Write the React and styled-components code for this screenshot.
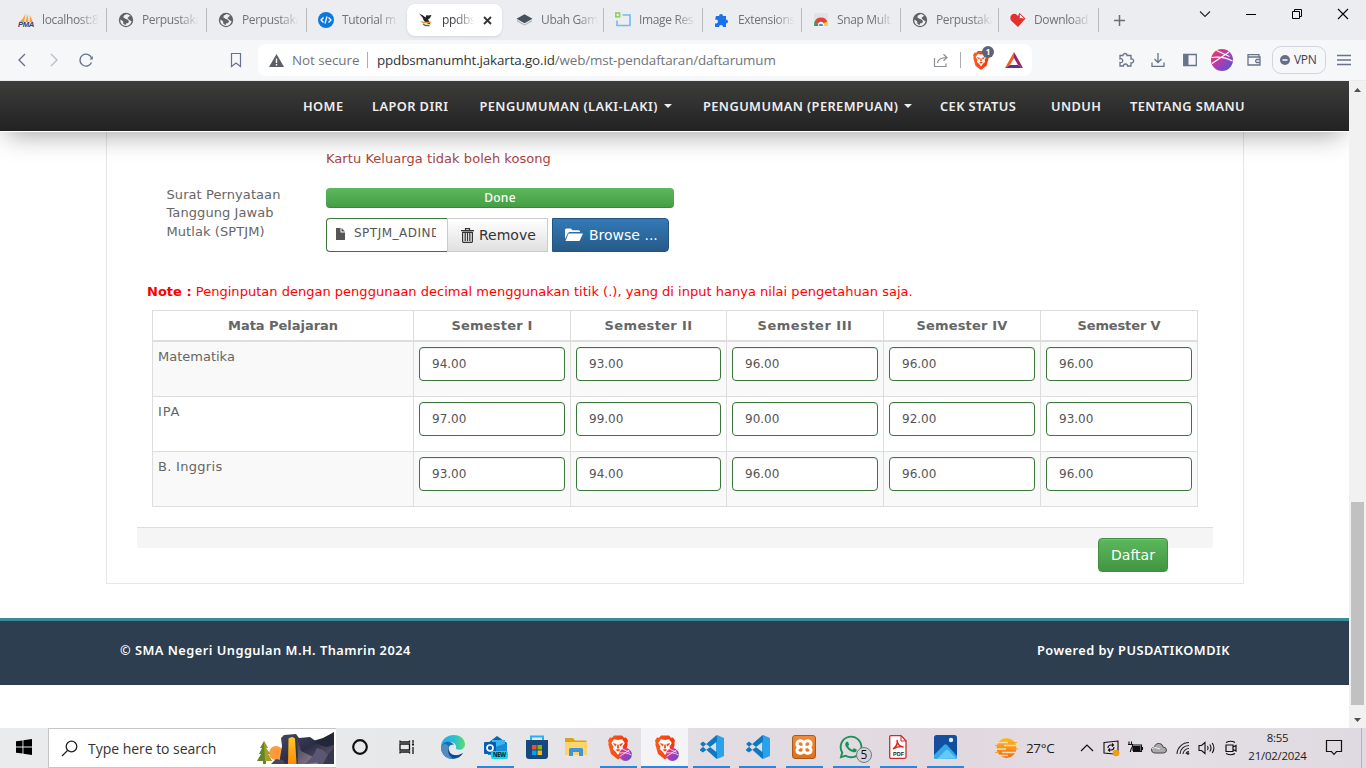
import React from "react";
import styled, { createGlobalStyle, css } from "styled-components";
import { FaWhatsapp } from "react-icons/fa";
import { SiXampp } from "react-icons/si";

const UI = '"Open Sans", "Noto Sans", sans-serif';
const PAGE = '"DejaVu Sans", "Noto Sans", sans-serif';

const Global = createGlobalStyle`
  * { box-sizing: border-box; }
  body { margin: 0; overflow: hidden; background: #fff; }
  svg { display: block; flex: none; overflow: visible; }
`;

const Screen = styled.div`
  width: 1366px;
  height: 768px;
  display: flex;
  flex-direction: column;
  overflow: hidden;
`;

/* ---------- browser chrome ---------- */
const TabStrip = styled.div`
  height: 40px;
  flex: none;
  display: flex;
  align-items: center;
  padding-left: 7px;
  background: #ecedf1;
  font: 12px/18px ${UI};
  letter-spacing: -0.35px;
  color: #6f7379;
`;
const Tab = styled.div`
  width: ${(p) => p.$w}px;
  height: 24px;
  display: flex;
  align-items: center;
  gap: 8px;
  padding-left: 11px;
  border-right: 1px solid #b9bbc0;
  ${(p) =>
    p.$plain &&
    css`
      border-right-color: transparent;
    `}
  ${(p) =>
    p.$active &&
    css`
      height: 32px;
      margin-right: 3px;
      border: 0;
      border-radius: 8px;
      background: #fff;
      color: #3b3e42;
      box-shadow: 0 1px 3px rgba(0, 0, 0, 0.1);
    `}
`;
const TabTitle = styled.span`
  width: ${(p) => p.$w || 57}px;
  white-space: nowrap;
  mask-image: linear-gradient(90deg, #000 calc(100% - 20px), transparent);
`;
const NewTab = styled.div`
  width: 40px;
  display: flex;
  justify-content: center;
`;
const WindowButtons = styled.div`
  margin-left: auto;
  height: 28px;
  align-self: flex-start;
  display: flex;
`;
const WindowButton = styled.div`
  width: 46px;
  display: flex;
  align-items: center;
  justify-content: center;
`;
const Toolbar = styled.div`
  height: 41px;
  flex: none;
  display: flex;
  align-items: center;
  padding: 0 6px;
  background: #f5f7f9;
  border-bottom: 1px solid #e9ecef;
`;
const ToolSlot = styled.div`
  width: 32px;
  height: 32px;
  display: flex;
  align-items: center;
  justify-content: center;
  margin-left: ${(p) => p.$ml || 0}px;
`;
const AddressBar = styled.div`
  width: 774px;
  height: 32px;
  margin-left: 6px;
  padding-left: 11px;
  display: flex;
  align-items: center;
  border-radius: 8px;
  background: #fff;
  font: 13.4px/20px ${UI};
  color: #6f757c;
`;
const Security = styled.span`
  width: 75px;
  margin-left: 8px;
  white-space: nowrap;
  letter-spacing: -0.05px;
`;
const Divider = styled.i`
  width: 1px;
  height: 16px;
  margin-left: ${(p) => p.$ml || 0}px;
  background: #a9acb2;
`;
const Url = styled.span`
  width: 556px;
  margin-left: 9px;
  white-space: nowrap;
  letter-spacing: -0.135px;
  b {
    font-weight: 400;
    color: #2f3338;
  }
`;
const ShieldWrap = styled.div`
  position: relative;
  margin-left: 12px;
  width: 20px;
`;
const ShieldCount = styled.span`
  position: absolute;
  left: 9px;
  top: -5px;
  width: 12px;
  height: 12px;
  border-radius: 6px;
  background: #5d6276;
  color: #fff;
  text-align: center;
  font: 700 8px/12px ${UI};
`;
const VpnPill = styled.div`
  width: 54px;
  height: 28px;
  margin: 0 2px;
  display: flex;
  align-items: center;
  gap: 4px;
  padding-left: 7px;
  border: 1px solid #d2d5dd;
  border-radius: 9px;
  color: #3e434d;
  font: 12px/18px ${UI};
  letter-spacing: -0.3px;
`;

/* ---------- web page ---------- */
const Viewport = styled.div`
  height: 647px;
  flex: none;
  display: flex;
`;
const Page = styled.div`
  width: 1349px;
  display: flex;
  flex-direction: column;
  overflow: hidden;
  background: #fff;
  font: 13px/18.57px ${PAGE};
  color: #666;
`;
const Nav = styled.nav`
  height: 51px;
  flex: none;
  position: relative;
  display: flex;
  align-items: center;
  padding-left: 303px;
  border-bottom: 1px solid #fff;
  background: linear-gradient(#3c3d3b, #222) padding-box;
  box-shadow: 0 10px 26px -7px rgba(0, 0, 0, 0.36);
  color: #eee;
  font: 600 12.8px/20px "Noto Sans", "Open Sans", sans-serif;
  letter-spacing: 0.42px;
`;
const NavItem = styled.a`
  width: ${(p) => p.$w}px;
  display: flex;
  align-items: center;
  gap: 6px;
  white-space: nowrap;
`;
const Caret = styled.i`
  border: 4px solid transparent;
  border-top-color: #eee;
  border-bottom: 0;
`;
const Card = styled.main`
  width: 1138px;
  height: 452px;
  flex: none;
  margin-left: 106px;
  padding: 18px 30px 0;
  border: 1px solid #e6e7e9;
  border-top: 0;
`;
const ErrorText = styled.div`
  padding-left: 189px;
  color: #a94442;
  letter-spacing: 0.05px;
`;
const FormRow = styled.div`
  margin: 17px 0 0 29.5px;
  display: flex;
  height: 67px;
`;
const Label = styled.label`
  width: 159.5px;
  flex: none;
  letter-spacing: 0.08px;
`;
const Upload = styled.div`
  width: 348px;
  padding-top: 2px;
`;
const Progress = styled.div`
  height: 20px;
  margin-bottom: 10px;
  border-radius: 4px;
  background: linear-gradient(#5cb85c, #449d44);
  box-shadow: inset 0 -1px 0 rgba(0, 0, 0, 0.15);
  color: #fff;
  text-align: center;
  font: 500 12px/20px "Noto Sans", sans-serif;
  letter-spacing: 0.3px;
`;
const FileGroup = styled.div`
  height: 34px;
  display: flex;
  font-size: 14px;
  white-space: nowrap;
`;
const FileName = styled.div`
  width: 121px;
  display: flex;
  align-items: center;
  gap: 9px;
  padding: 0 11px 2px 9px;
  border: 1px solid #3c763d;
  border-right: 0;
  border-radius: 4px 0 0 4px;
  color: #555;
  font-size: 12px;
  span {
    width: 82px;
    overflow: hidden;
    letter-spacing: 0.5px;
  }
`;
const RemoveButton = styled.div`
  width: 101px;
  display: flex;
  align-items: center;
  gap: 5px;
  padding: 1px 0 0 13px;
  border: 1px solid #ccc;
  background: linear-gradient(#fff, #e0e0e0);
  color: #333;
`;
const BrowseButton = styled.div`
  width: 117px;
  margin-left: 4px;
  display: flex;
  align-items: center;
  gap: 6px;
  padding: 1px 0 0 12px;
  border: 1px solid #245580;
  border-radius: 0 4px 4px 0;
  background: linear-gradient(#337ab7, #265a88);
  color: #fff;
`;
const Note = styled.p`
  margin: 30px 0 0 10px;
  color: #f00;
  white-space: nowrap;
  letter-spacing: 0.015px;
`;
const Table = styled.div`
  width: 1046px;
  margin: 9px 0 0 15px;
  border-top: 1px solid #ddd;
  border-left: 1px solid #ddd;
`;
const Row = styled.div`
  display: grid;
  grid-template-columns: 261px 157px 156px 157px 157px 157px;
  height: ${(p) => (p.$head ? 31 : 55)}px;
  border-bottom: ${(p) => (p.$head ? 2 : 1)}px solid #ddd;
  background: ${(p) => (p.$odd ? "#f9f9f9" : "#fff")};
`;
const Cell = styled.div`
  padding: ${(p) => (p.$text ? 6 : 5)}px 5px 0;
  border-right: 1px solid #ddd;
  letter-spacing: ${(p) => p.$spacing || 0}px;
`;
const HeadCell = styled(Cell)`
  font-weight: 700;
  text-align: center;
`;
const Score = styled.div`
  height: 34px;
  padding-left: 12px;
  border: 1px solid #3c763d;
  border-radius: 4px;
  background: #fff;
  box-shadow: inset 0 1px 1px rgba(0, 0, 0, 0.075);
  color: #555;
  font-size: 12px;
  line-height: 32px;
`;
const Strip = styled.div`
  height: 21px;
  margin-top: 20px;
  border-top: 1px solid #ddd;
  border-radius: 0 0 3px 3px;
  background: #f5f5f5;
`;
const SubmitButton = styled.div`
  position: relative;
  width: 70px;
  height: 34px;
  margin: -10px 45px 0 auto;
  border: 1px solid #3e8f3e;
  border-radius: 4px;
  background: linear-gradient(#5cb85c, #419641);
  box-shadow: inset 0 1px 0 rgba(255, 255, 255, 0.15);
  color: #fff;
  text-align: center;
  font-size: 14px;
  line-height: 32px;
`;
const Footer = styled.footer`
  height: 67px;
  flex: none;
  margin-top: 34px;
  padding: 20px 119px 0 120px;
  display: flex;
  justify-content: space-between;
  border-top: 3px solid #3b8c99;
  background: #2c3e50;
  color: #fff;
  font: 600 12.8px/18px "Noto Sans", sans-serif;
  letter-spacing: 0.48px;
  white-space: nowrap;
`;
const ScrollTrack = styled.div`
  width: 17px;
  padding: 7px 2px 6px;
  display: flex;
  flex-direction: column;
  align-items: center;
  background: #f1f1f1;
`;
const ScrollThumb = styled.div`
  width: 13px;
  height: 203px;
  margin: auto 0 13px;
  background: #c1c1c1;
`;

/* ---------- desktop taskbar ---------- */
const Taskbar = styled.div`
  height: 40px;
  flex: none;
  display: flex;
  background: linear-gradient(90deg, #e9ebed 0, #e7e8ea 34%, #e2dde3 52%, #e1d9df 70%, #e4dee5 85%, #dfd9e1);
  color: #1c1c1c;
  font-family: ${UI};
`;
const SearchBox = styled.div`
  width: 288px;
  display: flex;
  align-items: center;
  padding-left: 12px;
  overflow: hidden;
  border: 1px solid #c5c5c9;
  border-right: 0;
  background: #fff;
  color: #333;
  font-size: 14px;
  letter-spacing: -0.03px;
  span {
    width: 169px;
    margin-left: 10px;
    white-space: nowrap;
  }
`;
const TaskSlot = styled.div`
  width: ${(p) => p.$w}px;
  display: flex;
  align-items: center;
  justify-content: center;
  border-bottom: 2px solid transparent;
  ${(p) =>
    p.$open &&
    css`
      background: linear-gradient(#1a8cf0, #1a8cf0) center bottom / 37px 2px no-repeat border-box;
    `}
  ${(p) =>
    p.$active &&
    css`
      background: #f4f3f5;
      border-bottom-color: #1a8cf0;
    `}
`;
const Badged = styled.div`
  position: relative;
  color: #16935a;
`;
const CountBadge = styled.span`
  position: absolute;
  left: 18px;
  top: 13px;
  width: 16px;
  height: 16px;
  border: 1px solid #777;
  border-radius: 8px;
  background: #d6d3d7;
  color: #111;
  text-align: center;
  font: 12px/14px ${UI};
`;
const Profile = styled.span`
  position: absolute;
  right: -4px;
  bottom: -1px;
`;
const Weather = styled.div`
  margin-left: 27px;
  width: 80px;
  display: flex;
  align-items: center;
  gap: 9px;
  font-size: 13.5px;
  letter-spacing: -0.35px;
`;
const TraySlot = styled.div`
  width: 24px;
  display: flex;
  align-items: center;
  justify-content: center;
`;
const Clock = styled.div`
  width: 69px;
  padding-top: 1px;
  text-align: center;
  font-size: 11.4px;
  line-height: 18px;
  letter-spacing: -0.22px;
`;
const ShowDesktop = styled.div`
  width: 5px;
  margin-left: auto;
  border-left: 1px solid #b5afb8;
`;

/* ---------- drawings ---------- */
const Line = ({ d, s = 16, c = "#68738a", w = 1.4, children }) => (
  <svg width={s} height={s} viewBox={`0 0 ${s} ${s}`} fill="none" stroke={c} strokeWidth={w}>
    {d && <path d={d} />}
    {children}
  </svg>
);
const Globe = () => (
  <svg width="16" height="16" viewBox="0 0 16 16">
    <circle cx="8" cy="8" r="7.2" fill="#5f6368" />
    <path d="M8.7 2.1 6 3.5 5.2 5.3l2.2 1.5 2.5 1 1.1 1.7-1.1 1.7H8.1L7.7 13 5.5 12 5 9.3 2.4 7.5a5.8 5.8 0 0 0 2.7 5.8c4 2.1 7.5-.2 8.5-4L11.2 8 9.5 5.9l1.8-1.6 1.2-.2A6 6 0 0 0 8.7 2.1Z" fill="#eef0f3" />
  </svg>
);
const PmaIcon = () => (
  <svg width="16" height="16" viewBox="0 0 16 16">
    <path d="M7.400 1 6.300 10H1.300C4 8 6.500 5 7.400 1ZM8.800 2c1.200 2 1.700 5 1.500 8H7.400C8.500 7.400 9 5 8.800 2Zm2.600.9c1.600 2 2.600 4.500 3.400 7.100h-3.200c.4-2.500.3-4.800-.2-7.100Z" fill="#f89c2c" />
    <text x="0" y="15.300" fontFamily="Liberation Sans" fontWeight="700" fontStyle="italic" fontSize="6.500" textLength="16" lengthAdjust="spacingAndGlyphs" fill="#343a72">PMA</text>
  </svg>
);
const CodeIcon = () => (
  <svg width="16" height="16" viewBox="0 0 16 16" fill="none" stroke="#fff" strokeWidth="1.300">
    <circle cx="8" cy="8" r="8" fill="#0b78dd" stroke="none" />
    <path d="M5.500 5.500 3 8l2.500 2.500M10.500 5.500 13 8l-2.500 2.500M9 4.500l-2 7" />
  </svg>
);
const BirdIcon = () => (
  <svg width="16" height="16" viewBox="0 0 16 16">
    <path d="M1 1.500 5 3.500l2.500 2 1-2.500 1.500.5 3.500-.500-1.500 3-2 1.500 1.500 2.500 1 2.500-3-1L6 9 4.500 5.500Z" fill="#202423" />
    <path d="m1.500 9 4.500.8h8l-2 1.400H5Z" fill="#d99a2b" />
    <path d="m5 12 2.500 1.500h4" stroke="#5c6b4d" strokeWidth="1.400" fill="none" />
  </svg>
);
const LayersIcon = () => (
  <svg width="17" height="16" viewBox="0 0 17 16">
    <path d="m1 8 7.500 4.500L16 8v1.500L8.500 13.500 1 9.500Z" fill="#aeb5bc" />
    <path d="m.5 6.700 8-4.500 8 4.500-8 4.600Z" fill="#46535f" />
  </svg>
);
const ResizeIcon = () => (
  <svg width="16" height="16" viewBox="0 0 16 16" fill="none">
    <path d="M7.500 3H15v10.500H2V8.500" stroke="#6bbcf2" strokeWidth="1.600" />
    <rect x=".8" y="1" width="3.800" height="3.800" stroke="#93cf5b" strokeWidth="1.600" />
  </svg>
);
const PuzzleFilled = () => (
  <svg width="16" height="16" viewBox="0 0 16 16">
    <path d="M2 4h3a2 2 0 1 1 4 0h3v3.400a2 2 0 1 1 0 4V15H9a2 2 0 1 0-4 0H1v-3.700a2 2 0 1 0 0-3.500Z" fill="#1a73e8" />
  </svg>
);
const SnapIcon = () => (
  <svg width="16" height="16" viewBox="0 0 16 16">
    <rect x="1" y="1" width="14" height="7" fill="#e2e3e3" />
    <path d="M1.500 10a7 7 0 0 1 13 0L11 11.500H5Z" fill="#df453a" />
    <path d="M1.500 9.500C1 11 1 12.500 1.200 14H5l.5-2Z" fill="#21a35a" />
    <path d="M11 11 14.500 9.500c.5 1.500.5 3 .3 4.500H11Z" fill="#fdd02f" />
    <circle cx="8" cy="12.500" r="2.700" fill="#fff" />
    <path d="M5.700 14a2.300 2.300 0 0 1 4.600 0Z" fill="#4386f4" />
  </svg>
);
const HeartIcon = () => (
  <svg width="16" height="16" viewBox="0 0 16 16">
    <path d="M8 15 1 8.500C-1.500 4 3.500-.5 7 3l1 1 1.500-3 6 5.500Z" fill="#e6302b" />
    <path d="m9.500 1.500-.2 4.800 5.500.7Z" fill="#fff" stroke="#e6302b" strokeWidth=".8" />
  </svg>
);
const Avatar = ({ s }) => (
  <svg width={s} height={s} viewBox="0 0 22 22">
    <defs>
      <linearGradient id={`profile${s}`} x1="0" y1="0" x2="1" y2="1">
        <stop offset=".15" stopColor="#df3a73" />
        <stop offset=".55" stopColor="#a83db4" />
        <stop offset="1" stopColor="#4058dc" />
      </linearGradient>
    </defs>
    <circle cx="11" cy="11" r="11" fill={`url(#profile${s})`} />
    <path d="M.5 8.500c7-1 14-.5 21 3.500M1 14.500 18 3M5.500 1.500l13 6" stroke="#fff" strokeWidth="1.200" fill="none" />
  </svg>
);
const Lion = ({ w, h }) => (
  <svg width={w} height={h} viewBox="0 0 20 24">
    <defs>
      <linearGradient id={`lion${h}`}><stop stopColor="#ff5a1c" /><stop offset="1" stopColor="#f0360c" /></linearGradient>
    </defs>
    <path d="M6 0h8l2 2.200 2-.2 2 3-.6 2.200.2 2L17 18.500 10 24 3 18.500.4 9.200l.2-2L0 5l2-3 2 .2Z" fill={`url(#lion${h})`} />
    <path d="m10 4.500 4-.8 2.800 3.800-2.300 3.700.7 2.600-2.700 2.200L10 19.500 7.500 16l-2.700-2.200.7-2.600L3.200 7.500 6 3.700Z" fill="#fff" />
    <path d="m5 7.500 3.500 1L8 11l-2-1.500ZM15 7.500l-3.500 1L12 11l2-1.500ZM9.300 9h1.400l.3 3.500-1 .8-1-.8ZM7.500 14.300 10 13.600l2.500.7L10 16Z" fill={`url(#lion${h})`} />
  </svg>
);
const BatIcon = () => (
  <svg width="18" height="16" viewBox="0 0 18 16">
    <path d="M9 0 0 16l5-3 4-7Z" fill="#ff5a1f" />
    <path d="M9 0v6l4 7 5 3Z" fill="#9e1f63" />
    <path d="m0 16 5-3h8l5 3Z" fill="#662d91" />
  </svg>
);
const Trash = () => (
  <svg width="13" height="15" viewBox="0 0 13 15" fill="none" stroke="#333" strokeWidth="1.200">
    <path d="M4.500 2V.6h4V2M0 2.700h13M1.600 4v9.600q0 .8.800.8h8.200q.8 0 .8-.8V4M4.200 4.500v8.500M6.500 4.500v8.500M8.800 4.500v8.500M1.600 4.400h9.800" />
  </svg>
);
const FileIcon = () => (
  <svg width="9" height="12" viewBox="0 0 9 12">
    <path d="M0 0h4.500v4.500H9V12H0Z" fill="#555" />
    <path d="M5.500 0 9 3.500H5.500Z" fill="#555" />
  </svg>
);
const FolderOpen = () => (
  <svg width="18" height="14" viewBox="0 0 18 14">
    <path d="M0 11V1.500L1 .5h5l1.500 1.700H14l1 1V4H4.200L3 5Z" fill="#fff" />
    <path d="M3.500 5.500H18L14.500 13H.5Z" fill="#fff" />
  </svg>
);
const Windows = () => (
  <svg width="16" height="16" viewBox="0 0 16 16">
    <path d="m0 2.300 6.500-.9v6.100H0ZM7.400 1.300 16 0v7.500H7.400ZM0 8.500h6.500v6.100L0 13.700ZM7.400 8.500H16V16l-8.600-1.300Z" />
  </svg>
);
const Landscape = () => (
  <svg width="77" height="31" viewBox="0 0 77 31">
    <defs>
      <linearGradient id="rock" x1="0" y1="0" x2="1" y2="1">
        <stop stopColor="#454a66" /><stop offset=".5" stopColor="#2b2e44" /><stop offset="1" stopColor="#6d647c" />
      </linearGradient>
      <linearGradient id="slope" x1="0" y1="0" x2="1" y2="1">
        <stop stopColor="#3a3c54" /><stop offset="1" stopColor="#9a8590" />
      </linearGradient>
      <linearGradient id="fall" x1="0" y1="0" x2="0" y2="1">
        <stop stopColor="#ffc928" /><stop offset="1" stopColor="#ff8a00" />
      </linearGradient>
    </defs>
    <circle cx="19" cy="20" r="7" fill="#ff9a3e" />
    <path d="m22 31 3-18-1-8 3-3 12-1 3 4 11-1 7 5 8-5 9-5v32Z" fill="url(#rock)" />
    <path d="m56 8 10-3 11-5v12l-8 2-8-3Z" fill="#23273a" />
    <path d="m40 4 4 14 14 7 3 6H41Z" fill="url(#slope)" />
    <path d="m60 15 6 2 6 7-8 5-16 2 8-8Z" fill="#5b5673" />
    <path d="m72 20 5-5v16H66Z" fill="#34374f" />
    <path d="M31.500 5.500q3.500-3 6.500 0l1.500 25.500h-8.500Z" fill="url(#fall)" />
    <path d="m14 31 5-5 7 1 2 4Z" fill="#4b4660" />
    <path d="m7 8 4 7H9l4 6h-2l4 7H9v3H6v-3H0l4-7H2l3-6H3Z" fill="#66842a" />
    <path d="m7 8 4 7H9l4 6h-2l4 7H8Z" fill="#a8a022" />
  </svg>
);
const TaskView = () => (
  <Line s={16} c="#161616" w={1.3} d="M1 1.500V3h9.500V1.500M1 14.500V13h9.500v1.500M1 5h9.500v6H1ZM14 1v3M14 8v7">
    <rect x="13" y="4.500" width="2" height="2" fill="#161616" stroke="none" />
  </Line>
);
const Edge = () => (
  <svg width="24" height="24" viewBox="0 0 24 24">
    <defs>
      <linearGradient id="edgeTop"><stop stopColor="#24a6ea" /><stop offset=".6" stopColor="#2cc3cf" /><stop offset="1" stopColor="#60dc62" /></linearGradient>
    </defs>
    <path d="M0 12C0-3 23-4 24 9c0 5-5 7-9 5 1-4-2-7-6-7-5 0-7 4-9 5Z" fill="url(#edgeTop)" />
    <path d="M0 12c3-7 10-6 13-2-5-1-6 3-5 6 1 5 9 6 14 2-4 7-14 8-19 2-2-2-3-5-3-8Z" fill="#146cbd" />
    <path d="M8 13c-1 6 6 10 14 5-4 7-13 6-15 2-1-2-1-5 1-7Z" fill="#0e488f" />
    <path d="M0 12c3-5 7-3 8 1-2 4 0 8 4 10.500C5 24.500 0 19 0 12Z" fill="#528bc0" />
  </svg>
);
const Outlook = () => (
  <svg width="24" height="24" viewBox="0 0 24 24">
    <path d="m4 8 9-7 10 7v12H4Z" fill="#0a64ad" />
    <path d="M8 5h13v10H8Z" fill="#38b4ef" />
    <path d="m4 15 10-4 9-3v12H4Z" fill="#168bdc" />
    <rect x="0" y="7" width="12" height="12" rx="1" fill="#075eb5" />
    <circle cx="6" cy="13" r="3" fill="none" stroke="#fff" strokeWidth="1.700" />
    <rect x="7" y="16" width="17" height="8" rx="2" fill="#14d6e8" />
    <text x="8.800" y="22.300" fontFamily="Open Sans" fontSize="6" fontWeight="800" textLength="13.500" fill="#10384a">NEW</text>
  </svg>
);
const Store = () => (
  <svg width="24" height="24" viewBox="0 0 24 24">
    <path d="M6 6V1.500h12V6" fill="none" stroke="#21b4f5" strokeWidth="2" />
    <path d="M1 5h22v16q0 3-3 3H4q-3 0-3-3Z" fill="#17477c" />
    <path d="M7 10h4.500v4.500H7Z" fill="#f25022" /><path d="M12.500 10H17v4.500h-4.500Z" fill="#7fba00" />
    <path d="M7 15.500h4.500V20H7Z" fill="#00a4ef" /><path d="M12.500 15.500H17V20h-4.500Z" fill="#ffb900" />
  </svg>
);
const Folder = () => (
  <svg width="22" height="20" viewBox="0 0 22 20">
    <path d="M0 1h8l2 2.500h11.500V10H0Z" fill="#dca117" />
    <path d="M0 5h22v13H0Z" fill="#fdd467" />
    <path d="M4 19v-6.500q0-1.500 1.500-1.500h11q1.500 0 1.500 1.500V19h-4v-4H8v4Z" fill="#3b92dd" />
  </svg>
);
const VsCode = () => (
  <svg width="24" height="24" viewBox="0 0 24 24">
    <path d="m17 0 7 3v18l-7 3-1-1V1Z" fill="#2aa1e8" />
    <path d="M17 6.500 3 17.500 0 15.500v-1L16 .5l1 0ZM17 17.500 3 6.500.500 8.500v1L16 23.500h1Z" fill="#0c79c1" />
  </svg>
);
const XamppTile = styled.div`
  width: 24px;
  height: 24px;
  display: flex;
  align-items: center;
  justify-content: center;
  border: 1px solid #a65a20;
  border-radius: 3px;
  background: linear-gradient(#ed8a3c, #e36f17);
`;
const XamppMark = () => (
  <svg width="18" height="16" viewBox="0 0 18 16" fill="none" stroke="#fff" strokeWidth="3" strokeLinejoin="round" strokeLinecap="round">
    <path d="M9 5.500V4Q7.500 1.500 5 1.800T2 4.500 4.500 8Q2 9 2 11.500T5 14.200 9 12v-1.500M9 5.500V4q1.500-2.500 4-2.200T16 4.500 13.500 8q2.500 1 2.500 3.500t-3 2.700T9 12M7 8h4" />
  </svg>
);
const Pdf = () => (
  <svg width="18" height="24" viewBox="0 0 18 24">
    <path d="M2 .7h10l5 5V22q0 1.300-1.300 1.300H2Q.7 23.300.7 22V2Q.7.700 2 .7Z" fill="#fff" stroke="#cf2b26" strokeWidth="1.300" />
    <path d="M12 1v5h5" fill="none" stroke="#cf2b26" />
    <path d="M4 14c4-3 5-6 4-9 0 4 3 7 6.500 7-3-1-7 0-10.500 2Z" fill="none" stroke="#d22" strokeWidth="1.400" />
    <text x="4" y="21" fontFamily="Liberation Sans" fontWeight="700" fontSize="5.500" fill="#222">PDF</text>
  </svg>
);
const Photos = () => (
  <svg width="23" height="24" viewBox="0 0 23 24">
    <rect width="23" height="24" rx="2.500" fill="#124f9e" />
    <path d="m0 20 10-10q1.500-1.500 3 0l10 11v1q0 2-2 2H2q-2 0-2-2Z" fill="#35a8e8" />
    <path d="m3 24 9-9q1-1 2 0l8.500 8.500Z" fill="#63c9f6" />
    <circle cx="17" cy="5" r="2.200" fill="#dff1ff" />
  </svg>
);
const WeatherIcon = () => (
  <svg width="22" height="22" viewBox="0 0 22 22">
    <defs>
      <linearGradient id="sun" x1="0" y1="0" x2="0" y2="1"><stop stopColor="#ffbb20" /><stop offset="1" stopColor="#ef6a10" /></linearGradient>
    </defs>
    <circle cx="11.500" cy="11" r="10" fill="url(#sun)" />
    <path d="M0 5.500h13M9 8.500h14M-1 12h12M7 15.500h15M3 18.500h10" stroke="#f9dcb4" strokeWidth="1.300" />
    <path d="M13 5.500h9M0 8.500h5M16 12h7M0 15.500h4" stroke="#f5a623" strokeWidth="1.200" />
  </svg>
);
const BraveApp = () => (
  <Badged>
    <Lion w={20} h={25} />
    <Profile><Avatar s={13} /></Profile>
  </Badged>
);

/* ---------- data ---------- */
const tabs = [
  ["localhost:8", PmaIcon, 100],
  ["Perpustaka", Globe, 100],
  ["Perpustaka", Globe, 100],
  ["Tutorial m", CodeIcon, 100, "plain"],
  ["ppdbs", BirdIcon, 95, "active"],
  ["Ubah Gam", LayersIcon, 99],
  ["Image Res", ResizeIcon, 99],
  ["Extensions", PuzzleFilled, 99],
  ["Snap Mult", SnapIcon, 99],
  ["Perpustaka", Globe, 98],
  ["Download", HeartIcon, 100],
];
const menu = [
  ["HOME", 69],
  ["LAPOR DIRI", 107.5],
  ["PENGUMUMAN (LAKI-LAKI)", 223.5, true],
  ["PENGUMUMAN (PEREMPUAN)", 237, true],
  ["CEK STATUS", 111],
  ["UNDUH", 79],
  ["TENTANG SMANU", 120],
];
const headings = [
  ["Mata Pelajaran", -0.04],
  ["Semester I", 0.2],
  ["Semester II", 0.35],
  ["Semester III", 0.5],
  ["Semester IV", 0.15],
  ["Semester V", -0.12],
];
const grades = [
  ["Matematika", 0, ["94.00", "93.00", "96.00", "96.00", "96.00"]],
  ["IPA", 0.8, ["97.00", "99.00", "90.00", "92.00", "93.00"]],
  ["B. Inggris", 0.3, ["93.00", "94.00", "96.00", "96.00", "96.00"]],
];

function Browser() {
  return (
    <>
      <TabStrip>
        {tabs.map(([title, Icon, w, kind], i) => (
          <Tab key={i} $w={w} $plain={kind === "plain"} $active={kind === "active"}>
            <Icon />
            <TabTitle $w={kind === "active" ? 33 : 57}>{title}</TabTitle>
            {kind === "active" && <Line s={9} c="#333" w={1.8} d="m1 1 7 7M8 1 1 8" />}
          </Tab>
        ))}
        <NewTab><Line s={11} c="#6b6e73" w={1.5} d="M5.500 0v11M0 5.500h11" /></NewTab>
        <WindowButtons>
          <WindowButton><Line s={10} c="#222" w={1.1} d="m0 2.500 5 5 5-5" /></WindowButton>
          <WindowButton><Line s={10} c="#000" w={1} d="M0 5.500h10" /></WindowButton>
          <WindowButton><Line s={10} c="#000" w={1} d="M.5 2.500h7v7h-7ZM2.500 2.500v-2h7v7h-2" /></WindowButton>
          <WindowButton><Line s={10} c="#000" w={1.1} d="m0 0 10 10M10 0 0 10" /></WindowButton>
        </WindowButtons>
      </TabStrip>
      <Toolbar>
        <ToolSlot><Line s={14} d="m10 1-6 6 6 6" /></ToolSlot>
        <ToolSlot><Line s={14} c="#b9bfc9" d="m4 1 6 6-6 6" /></ToolSlot>
        <ToolSlot>
          <Line s={14} d="M12.600 5A6 6 0 1 0 12.500 9.500">
            <path d="M10.500 6.500h3.300V3Z" fill="#68738a" stroke="none" />
          </Line>
        </ToolSlot>
        <ToolSlot $ml={118}><Line s={14} w={1.2} d="M2.500.5h9v13L7 10l-4.500 3.500Z" /></ToolSlot>
        <AddressBar>
          <svg width="15" height="13" viewBox="0 0 15 13">
            <path d="M7.500 0 15 13H0Z" fill="#5b5f65" />
            <path d="M7.500 4.500V9M7.500 10v1.500" stroke="#fff" strokeWidth="1.400" />
          </svg>
          <Security>Not secure</Security>
          <Divider />
          <Url><b>ppdbsmanumht.jakarta.go.id</b>/web/mst-pendaftaran/daftarumum</Url>
          <Line s={15} c="#8b8e93" w={1.2} d="M1.500 5v8.500H13V10.500M4.500 10q.5-5 9-5.500M10.500 1.300l3.500 3.200-3.500 3.300" />
          <Divider $ml={12} />
          <ShieldWrap>
            <Lion w={16} h={19} />
            <ShieldCount>1</ShieldCount>
          </ShieldWrap>
          <ToolSlot $ml={5}><BatIcon /></ToolSlot>
        </AddressBar>
        <ToolSlot $ml={78}>
          <Line s={16} w={1.3} d="M2 3.500h3a2 2 0 1 1 4 0h4V7a2 2 0 1 1 0 3.800V14H9.500a2 2 0 0 0-4 0H2v-3.500a2 2 0 1 0 0-3.700Z" />
        </ToolSlot>
        <ToolSlot><Line s={14} w={1.3} d="M7 0v9M3.500 6 7 9.500 10.500 6M1 9.500v3.800h12V9.500" /></ToolSlot>
        <ToolSlot>
          <Line s={14} w={1.3} d="M.7 1.500h12.600v11H.7Z">
            <path d="M1 2h4.500v10H1Z" fill="#68738a" stroke="none" />
          </Line>
        </ToolSlot>
        <ToolSlot><Avatar s={22} /></ToolSlot>
        <ToolSlot><Line s={14} w={1.3} d="M12 4V1.700H1V12h12V4H1M13 6.500H9.500q-1.800 1.500 0 3H13" /></ToolSlot>
        <VpnPill>
          <svg width="10" height="10" viewBox="0 0 10 10">
            <circle cx="5" cy="5" r="5" fill="#666d86" />
            <path d="M2.500 5h5" stroke="#fff" strokeWidth="1.500" />
          </svg>
          VPN
        </VpnPill>
        <ToolSlot><Line s={14} w={1.3} d="M0 2.500h14M0 7h14M0 11.500h14" /></ToolSlot>
      </Toolbar>
    </>
  );
}

function WebPage() {
  return (
    <Page>
      <Nav>
        {menu.map(([text, w, drop]) => (
          <NavItem key={text} $w={w}>{text}{drop && <Caret />}</NavItem>
        ))}
      </Nav>
      <Card>
        <ErrorText>Kartu Keluarga tidak boleh kosong</ErrorText>
        <FormRow>
          <Label>Surat Pernyataan<br />Tanggung Jawab<br />Mutlak (SPTJM)</Label>
          <Upload>
            <Progress>Done</Progress>
            <FileGroup>
              <FileName><FileIcon /><span>SPTJM_ADIND</span></FileName>
              <RemoveButton><Trash />Remove</RemoveButton>
              <BrowseButton><FolderOpen />Browse ...</BrowseButton>
            </FileGroup>
          </Upload>
        </FormRow>
        <Note>
          <b>Note :</b> Penginputan dengan penggunaan decimal menggunakan titik (.), yang di input hanya nilai pengetahuan saja.
        </Note>
        <Table>
          <Row $head>
            {headings.map(([text, spacing]) => (
              <HeadCell key={text} $text $spacing={spacing}>{text}</HeadCell>
            ))}
          </Row>
          {grades.map(([name, spacing, scores], r) => (
            <Row key={name} $odd={r % 2 === 0}>
              <Cell $text $spacing={spacing}>{name}</Cell>
              {scores.map((v, i) => <Cell key={i}><Score>{v}</Score></Cell>)}
            </Row>
          ))}
        </Table>
        <Strip />
        <SubmitButton>Daftar</SubmitButton>
      </Card>
      <Footer>
        <span>© SMA Negeri Unggulan M.H. Thamrin 2024</span>
        <span>Powered by PUSDATIKOMDIK</span>
      </Footer>
    </Page>
  );
}

function Desktop() {
  return (
    <Taskbar>
      <TaskSlot $w={48}><Windows /></TaskSlot>
      <SearchBox>
        <Line s={17} c="#222" w={1.3} d="M1 16l5.500-5.500"><circle cx="10.500" cy="6.500" r="5.300" /></Line>
        <span>Type here to search</span>
        <Landscape />
      </SearchBox>
      <TaskSlot $w={48}><Line s={16} c="#111" w={2.2}><circle cx="8" cy="8" r="6.800" /></Line></TaskSlot>
      <TaskSlot $w={46}><TaskView /></TaskSlot>
      <TaskSlot $w={45}><Edge /></TaskSlot>
      <TaskSlot $w={41} $open><Outlook /></TaskSlot>
      <TaskSlot $w={41}><Store /></TaskSlot>
      <TaskSlot $w={38}><Folder /></TaskSlot>
      <TaskSlot $w={46} $open><BraveApp /></TaskSlot>
      <TaskSlot $w={47} $open $active><BraveApp /></TaskSlot>
      <TaskSlot $w={47} $open><VsCode /></TaskSlot>
      <TaskSlot $w={45} $open><VsCode /></TaskSlot>
      <TaskSlot $w={48} $open><XamppTile><XamppMark /></XamppTile></TaskSlot>
      <TaskSlot $w={46} $open>
        <Badged><FaWhatsapp size={26} /><CountBadge>5</CountBadge></Badged>
      </TaskSlot>
      <TaskSlot $w={48} $open><Pdf /></TaskSlot>
      <TaskSlot $w={46} $open><Photos /></TaskSlot>
      <Weather><WeatherIcon />27°C</Weather>
      <TraySlot><Line s={12} c="#111" w={1.2} d="m0 9 6-6 6 6" /></TraySlot>
      <TraySlot>
        <Line s={16} c="#111" w={1.1} d="M1 2.500 15 1v12l-4 1-10-1ZM5 8q0-3 3-3h2M9 3.500 10.500 5 9 6.500M11 7q0 3-3 3H6M7 8.500 5.500 10 7 11.500">
          <circle cx="13" cy="13" r="3.300" fill="#f79a12" stroke="none" />
        </Line>
      </TraySlot>
      <TraySlot>
        <Line s={16} c="#111" w={1.1} d="M2 1.500v3M4.500 1.500v3M1 4.500h4.500v2q-2 3-2.200 5.500M6 5h8.500v6.500H6M15.500 7v3"><path d="M6 6.500h7v4H6Z" fill="#111" /></Line>
      </TraySlot>
      <TraySlot>
        <Line s={16} c="#444" w={1}><path d="M3.500 13Q.5 12.500.5 10t3-3q1-4 5-3.500 3 .3 3.500 3.500 3.500.3 3.500 3t-3 3Z" fill="#aaa" /><path d="M1 9q2-3 5-1l3 1" stroke="#eee" /></Line>
      </TraySlot>
      <TraySlot>
        <Line s={14} c="#222" w={1.1} d="M1 13A12 12 0 0 1 13 1.500M4 13a9 9 0 0 1 9-8.500M7 13a6 6 0 0 1 6-5.500M10 13a3 3 0 0 1 3-2.500"><circle cx="12" cy="12.500" r="1.300" fill="#222" stroke="none" /></Line>
      </TraySlot>
      <TraySlot>
        <Line s={16} c="#111" w={1.1} d="M0 5.500h2.500L6 2.500v11l-3.500-3H0ZM8.500 6q1.300 2 0 4M10.800 4.500q2.400 3.500 0 7M13.200 3q3.400 5 0 10" />
      </TraySlot>
      <TraySlot>
        <Line s={16} c="#111" w={1.2} d="M3 2.500q5-2.500 9 0M3 13.500q5 2.500 9 0M3 5h7v6.500H3ZM10 7l3-1.500V11l-3-1.500" />
      </TraySlot>
      <Clock>8:55<br />21/02/2024</Clock>
      <TaskSlot $w={43}><Line s={16} c="#111" w={1.2} d="M.5 1.500h15v11h-5L8 15.300l-2.500-2.800h-5Z" /></TaskSlot>
      <ShowDesktop />
    </Taskbar>
  );
}

export default function App() {
  return (
    <Screen>
      <Global />
      <Browser />
      <Viewport>
        <WebPage />
        <ScrollTrack>
          <svg width="7" height="4" viewBox="0 0 7 4"><path d="M3.500 0 7 4H0Z" fill="#505050" /></svg>
          <ScrollThumb />
          <svg width="7" height="4" viewBox="0 0 7 4"><path d="M3.500 4 7 0H0Z" fill="#505050" /></svg>
        </ScrollTrack>
      </Viewport>
      <Desktop />
    </Screen>
  );
}
